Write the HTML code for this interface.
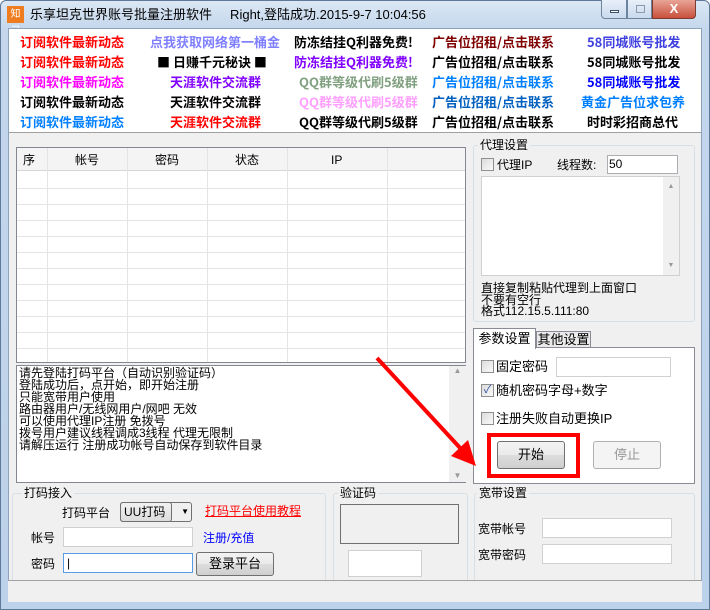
<!DOCTYPE html>
<html><head><meta charset="utf-8">
<style>
*{box-sizing:border-box;margin:0;padding:0}
body{width:710px;height:610px;overflow:hidden;background:#fff;font-family:"Liberation Sans","Noto Sans CJK SC","WenQuanYi Zen Hei",sans-serif;font-size:12px;color:#000;position:relative}
.a{position:absolute}
.win{left:0;top:0;width:710px;height:610px;background:linear-gradient(#dbe7f4,#c3d6ec 30px,#bcd2ea);border:1px solid #5f7a99;border-radius:6px 6px 0 0}
.client{left:8px;top:28px;width:694px;height:574px;background:#f0f0f0;border:1px solid #8ea3bb}
.ads{left:9px;top:29px;width:692px;height:104px;background:#fff;border-bottom:1px solid #a0a0a0}
.ad{position:absolute;font-weight:bold;font-size:13px;white-space:nowrap;font-family:"Noto Sans CJK SC","WenQuanYi Zen Hei",sans-serif;line-height:16px}
.white{background:#fff;border:1px solid #abadb3}
.grp{position:absolute;border:1px solid #d5dfe5;border-radius:3px}
.gl{position:absolute;background:#f0f0f0;padding:0 2px;font-size:12px;line-height:14px}
.cb{position:absolute;width:13px;height:13px;border:1px solid #8f8f8f;background:linear-gradient(135deg,#dcdcdc,#fafafa)}
.btn{position:absolute;border:1px solid #707070;border-radius:3px;background:linear-gradient(#f2f2f2,#ebebeb 50%,#dddddd 51%,#cfcfcf);text-align:center;font-size:13px}
.t{position:absolute;white-space:nowrap;font-size:12px;line-height:14px}
</style></head><body>
<div class="a win"></div>
<div class="a" style="left:7px;top:6px;width:17px;height:17px;background:#f07c20;color:#fff;font-size:10px;line-height:17px;text-align:center">知己</div>
<div class="t" style="left:30px;top:7px;font-size:13px;line-height:16px">乐享坦克世界账号批量注册软件&nbsp;&nbsp;&nbsp;&nbsp;&nbsp;Right,登陆成功.2015-9-7 10:04:56</div>
<div class="a" style="left:601px;top:0;width:26px;height:19px;border:1px solid #6d84a0;border-top:none;border-radius:0 0 0 4px;background:linear-gradient(#e8f0f9,#c9d9ec)"><div class="a" style="left:8px;top:10px;width:9px;height:3px;background:#fff;border:1px solid #3b4f68"></div></div>
<div class="a" style="left:627px;top:0;width:25px;height:19px;border:1px solid #6d84a0;border-top:none;background:linear-gradient(#e8f0f9,#c9d9ec)"><div class="a" style="left:8px;top:5px;width:9px;height:8px;border:1px solid #8a9ab0"></div></div>
<div class="a" style="left:652px;top:0;width:44px;height:19px;border:1px solid #7a3b30;border-top:none;border-radius:0 0 4px 0;background:linear-gradient(#e8a497,#c9503c);color:#fff;font-weight:bold;font-size:13px;text-align:center;line-height:17px">X</div>
<div class="a client"></div>
<div class="a ads"></div>
<!-- ads rows -->
<div class="ad" style="left:20px;top:34px;color:#f00">订阅软件最新动态</div>
<div class="ad" style="left:150px;top:34px;color:#8080ff">点我获取网络第一桶金</div>
<div class="ad" style="left:294px;top:34px;color:#000">防冻结挂Q利器免费!</div>
<div class="ad" style="left:432px;top:34px;color:#800000">广告位招租/点击联系</div>
<div class="ad" style="left:587px;top:34px;color:#4040e0">58同城账号批发</div>

<div class="ad" style="left:20px;top:54px;color:#f00">订阅软件最新动态</div>
<div class="ad" style="left:157px;top:54px;color:#000">■ 日赚千元秘诀 ■</div>
<div class="ad" style="left:294px;top:54px;color:#8000ff">防冻结挂Q利器免费!</div>
<div class="ad" style="left:432px;top:54px;color:#000">广告位招租/点击联系</div>
<div class="ad" style="left:587px;top:54px;color:#000">58同城账号批发</div>

<div class="ad" style="left:20px;top:74px;color:#f0f">订阅软件最新动态</div>
<div class="ad" style="left:170px;top:74px;color:#8000ff">天涯软件交流群</div>
<div class="ad" style="left:299px;top:74px;color:#80a080">QQ群等级代刷5级群</div>
<div class="ad" style="left:432px;top:74px;color:#0080ff">广告位招租/点击联系</div>
<div class="ad" style="left:587px;top:74px;color:#0000ff">58同城账号批发</div>

<div class="ad" style="left:20px;top:94px;color:#000">订阅软件最新动态</div>
<div class="ad" style="left:170px;top:94px;color:#000">天涯软件交流群</div>
<div class="ad" style="left:299px;top:94px;color:#ffa0ff">QQ群等级代刷5级群</div>
<div class="ad" style="left:432px;top:94px;color:#0060c0">广告位招租/点击联系</div>
<div class="ad" style="left:581px;top:94px;color:#0080ff">黄金广告位求包养</div>

<div class="ad" style="left:20px;top:114px;color:#0080ff">订阅软件最新动态</div>
<div class="ad" style="left:170px;top:114px;color:#f00">天涯软件交流群</div>
<div class="ad" style="left:299px;top:114px;color:#000">QQ群等级代刷5级群</div>
<div class="ad" style="left:432px;top:114px;color:#000">广告位招租/点击联系</div>
<div class="ad" style="left:587px;top:114px;color:#000">时时彩招商总代</div>

<!-- list view -->
<div class="a" style="left:16px;top:147px;width:450px;height:216px;background:#fff;border:1px solid #828790;overflow:hidden">
<svg width="450" height="216" style="position:absolute;left:0;top:0">
<rect x="0" y="0" width="450" height="22" fill="#f4f4f4"/>
<line x1="0" y1="22.5" x2="450" y2="22.5" stroke="#d5d5d5"/>
<g stroke="#e4e4e4">
<line x1="30.5" y1="0" x2="30.5" y2="216"/><line x1="110.5" y1="0" x2="110.5" y2="216"/>
<line x1="190.5" y1="0" x2="190.5" y2="216"/><line x1="270.5" y1="0" x2="270.5" y2="216"/>
<line x1="370.5" y1="0" x2="370.5" y2="216"/>
<line x1="0" y1="40.5" x2="450" y2="40.5"/><line x1="0" y1="56.5" x2="450" y2="56.5"/>
<line x1="0" y1="72.5" x2="450" y2="72.5"/><line x1="0" y1="88.5" x2="450" y2="88.5"/>
<line x1="0" y1="104.5" x2="450" y2="104.5"/><line x1="0" y1="120.5" x2="450" y2="120.5"/>
<line x1="0" y1="136.5" x2="450" y2="136.5"/><line x1="0" y1="152.5" x2="450" y2="152.5"/>
<line x1="0" y1="168.5" x2="450" y2="168.5"/><line x1="0" y1="184.5" x2="450" y2="184.5"/>
<line x1="0" y1="200.5" x2="450" y2="200.5"/>
</g></svg>
<div class="t" style="left:6px;top:5px">序</div>
<div class="t" style="left:58px;top:5px">帐号</div>
<div class="t" style="left:138px;top:5px">密码</div>
<div class="t" style="left:218px;top:5px">状态</div>
<div class="t" style="left:314px;top:5px">IP</div>
</div>
<!-- log -->
<div class="a" style="left:16px;top:365px;width:450px;height:118px;background:#fff;border:1px solid #828790">
<div class="a" style="left:432px;top:0;width:17px;height:116px;background:#f0f0f0;color:#999;font-size:8px;text-align:center">▲<div style="position:absolute;bottom:2px;width:17px">▼</div></div>
<div class="t" style="left:2px;top:1px;line-height:12px;font-size:12px">请先登陆打码平台（自动识别验证码）<br>登陆成功后，点开始，即开始注册<br>只能宽带用户使用<br>路由器用户/无线网用户/网吧 无效<br>可以使用代理IP注册 免拨号<br>拨号用户建议线程调成3线程 代理无限制<br>请解压运行 注册成功帐号自动保存到软件目录</div>
</div>
<!-- proxy group -->
<div class="grp" style="left:473px;top:145px;width:222px;height:177px"></div>
<div class="gl" style="left:478px;top:138px">代理设置</div>
<div class="cb" style="left:481px;top:158px"></div>
<div class="t" style="left:497px;top:158px">代理IP</div>
<div class="t" style="left:557px;top:158px">线程数:</div>
<div class="a white" style="left:607px;top:155px;width:71px;height:19px;padding-left:1px;line-height:17px">50</div>
<div class="a" style="left:481px;top:176px;width:199px;height:100px;background:#fff;border:1px solid #d0d0d0">
<div class="a" style="left:181px;top:0;width:16px;height:98px;background:#f0f0f0;color:#999;font-size:7px;text-align:center;padding-top:6px">▲<div style="position:absolute;bottom:6px;width:16px">▼</div></div></div>
<div class="t" style="left:481px;top:283px;line-height:11.5px">直接复制粘贴代理到上面窗口<br>不要有空行<br>格式112.15.5.111:80</div>
<!-- tabs -->
<div class="a" style="left:473px;top:347px;width:222px;height:137px;background:#fff;border:1px solid #898c95"></div>
<div class="a" style="left:473px;top:328px;width:63px;height:21px;background:#fff;border:1px solid #898c95;border-bottom:none;font-size:13px;text-align:center;line-height:20px">参数设置</div>
<div class="a" style="left:536px;top:331px;width:55px;height:17px;background:#eaeaea;border:1px solid #898c95;font-size:13px;text-align:center;line-height:16px">其他设置</div>
<div class="cb" style="left:481px;top:360px"></div>
<div class="t" style="left:496px;top:360px;font-size:13px">固定密码</div>
<div class="a white" style="left:556px;top:357px;width:115px;height:20px;border-color:#d0d0d0"></div>
<div class="cb" style="left:481px;top:384px;color:#3050a0;font-size:11px;line-height:11px;text-align:center">✓</div>
<div class="t" style="left:496px;top:384px;font-size:13px">随机密码字母+数字</div>
<div class="cb" style="left:481px;top:412px"></div>
<div class="t" style="left:496px;top:412px;font-size:13px">注册失败自动更换IP</div>
<div class="a" style="left:487px;top:433px;width:93px;height:45px;border:4px solid #f00"></div>
<div class="btn" style="left:497px;top:441px;width:68px;height:28px;line-height:26px">开始</div>
<div class="btn" style="left:593px;top:441px;width:68px;height:28px;line-height:26px;color:#999;border-color:#b0b0b0;background:#f4f4f4">停止</div>
<!-- arrow -->
<svg class="a" style="left:0;top:0" width="710" height="610"><line x1="377" y1="358" x2="462" y2="450" stroke="#f00" stroke-width="4"/><polygon points="476,466 451,456 468,440" fill="#f00"/></svg>
<!-- bottom groups -->
<div class="grp" style="left:12px;top:493px;width:228px;height:95px;border:none"></div>
<div class="grp" style="left:12px;top:493px;width:314px;height:95px"></div>
<div class="gl" style="left:22px;top:486px">打码接入</div>
<div class="t" style="left:62px;top:506px">打码平台</div>
<div class="a" style="left:120px;top:502px;width:52px;height:20px;border:1px solid #707070;border-radius:3px;background:linear-gradient(#f2f2f2,#dcdcdc);font-size:12px;line-height:18px;padding-left:3px">UU打码<span style="position:absolute;right:-18px;font-size:8px">▼</span></div>
<div class="a" style="left:120px;top:502px;width:22px;"></div>
<div class="a" style="left:120px;top:502px;width:72px;height:20px;border:1px solid #707070;border-radius:3px"></div>
<div class="t" style="left:205px;top:504px;color:#f00;text-decoration:underline">打码平台使用教程</div>
<div class="t" style="left:31px;top:531px">帐号</div>
<div class="a white" style="left:63px;top:527px;width:130px;height:20px;border-color:#d0d0d0"></div>
<div class="t" style="left:203px;top:531px;color:#00f">注册/充值</div>
<div class="t" style="left:31px;top:557px">密码</div>
<div class="a white" style="left:63px;top:553px;width:130px;height:20px;border-color:#569de5;line-height:18px;padding-left:3px">|</div>
<div class="btn" style="left:196px;top:552px;width:78px;height:24px;line-height:22px">登录平台</div>

<div class="grp" style="left:333px;top:493px;width:135px;height:95px"></div>
<div class="gl" style="left:338px;top:486px">验证码</div>
<div class="a" style="left:340px;top:504px;width:119px;height:40px;border:1px solid #707070;background:#f0f0f0"></div>
<div class="a white" style="left:348px;top:550px;width:74px;height:27px;border-color:#d0d0d0"></div>

<div class="grp" style="left:474px;top:493px;width:221px;height:95px"></div>
<div class="gl" style="left:477px;top:486px">宽带设置</div>
<div class="t" style="left:478px;top:522px">宽带帐号</div>
<div class="a white" style="left:542px;top:518px;width:130px;height:20px;border-color:#d0d0d0"></div>
<div class="t" style="left:478px;top:548px">宽带密码</div>
<div class="a white" style="left:542px;top:544px;width:130px;height:20px;border-color:#d0d0d0"></div>
<!-- status bar -->
<div class="a" style="left:8px;top:580px;width:694px;height:22px;background:#f0f0f0;border-top:1px solid #a0a0a0"></div>
</body></html>
